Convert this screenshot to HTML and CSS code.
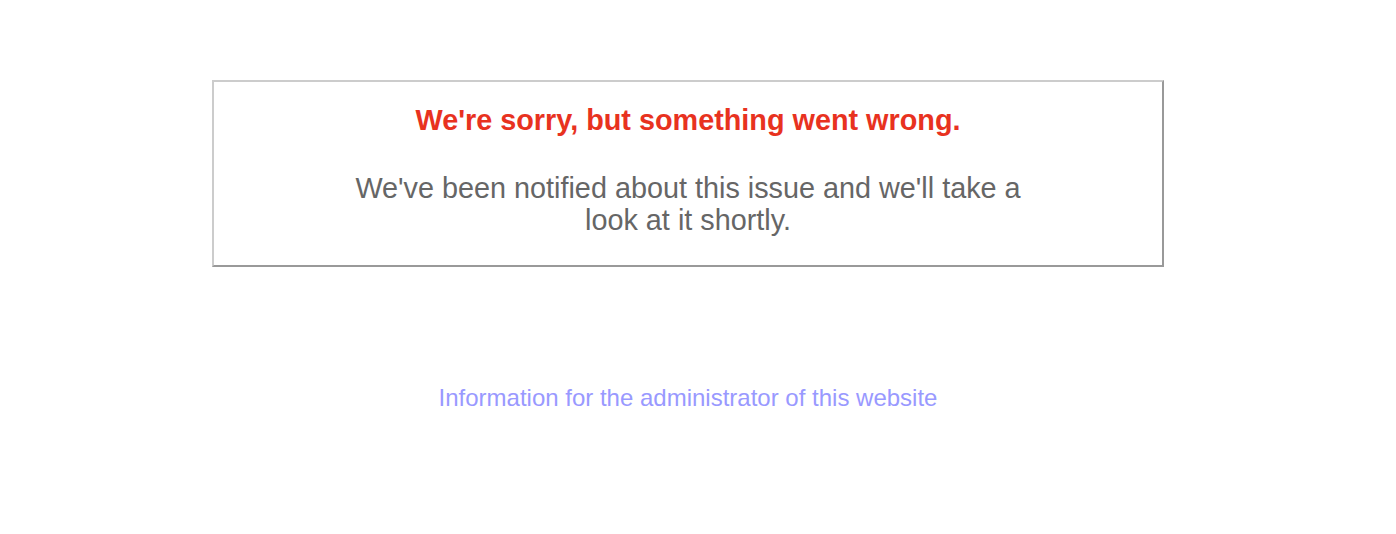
FILE: index.html
```html
<!DOCTYPE html>
<html lang="en">
<head>
  <meta charset="UTF-8" />
  <meta name="viewport" content="width=device-width, initial-scale=1.0" />
  <title>We're sorry, but something went wrong</title>
  <link rel="stylesheet" href="styles.css">
</head>
<body>
  <div class="dialog">
    <h1>We're sorry, but something went wrong.</h1>
    <p>We've been notified about this issue and we'll take a look at it shortly.</p>
  </div>
  <div class="admin">
    <a href="#">Information for the administrator of this website</a>
  </div>
</body>
</html>
```

FILE: styles.css
```css
body {
  margin: 0 20px 0 0;
  padding: 0;
  background-color: #fff;
  color: #666;
  text-align: center;
  font-family: "Liberation Sans", Arial, sans-serif;
}

.dialog {
  width: 948px;
  margin: 80px auto 0 auto;
  padding: 20px 0 29px 0;
  border: 2px solid #ccc;
  border-right-color: #999;
  border-bottom-color: #999;
}

.dialog h1 {
  margin: 0;
  font-size: 28.8px;
  line-height: 36px;
  color: #e8321f;
}

.dialog p {
  max-width: 700px;
  margin: 34px auto 0 auto;
  font-size: 28.8px;
  line-height: 32px;
}

.admin {
  margin-top: 117px;
  font-size: 24px;
}

.admin a {
  color: #99f;
  text-decoration: none;
}
```
